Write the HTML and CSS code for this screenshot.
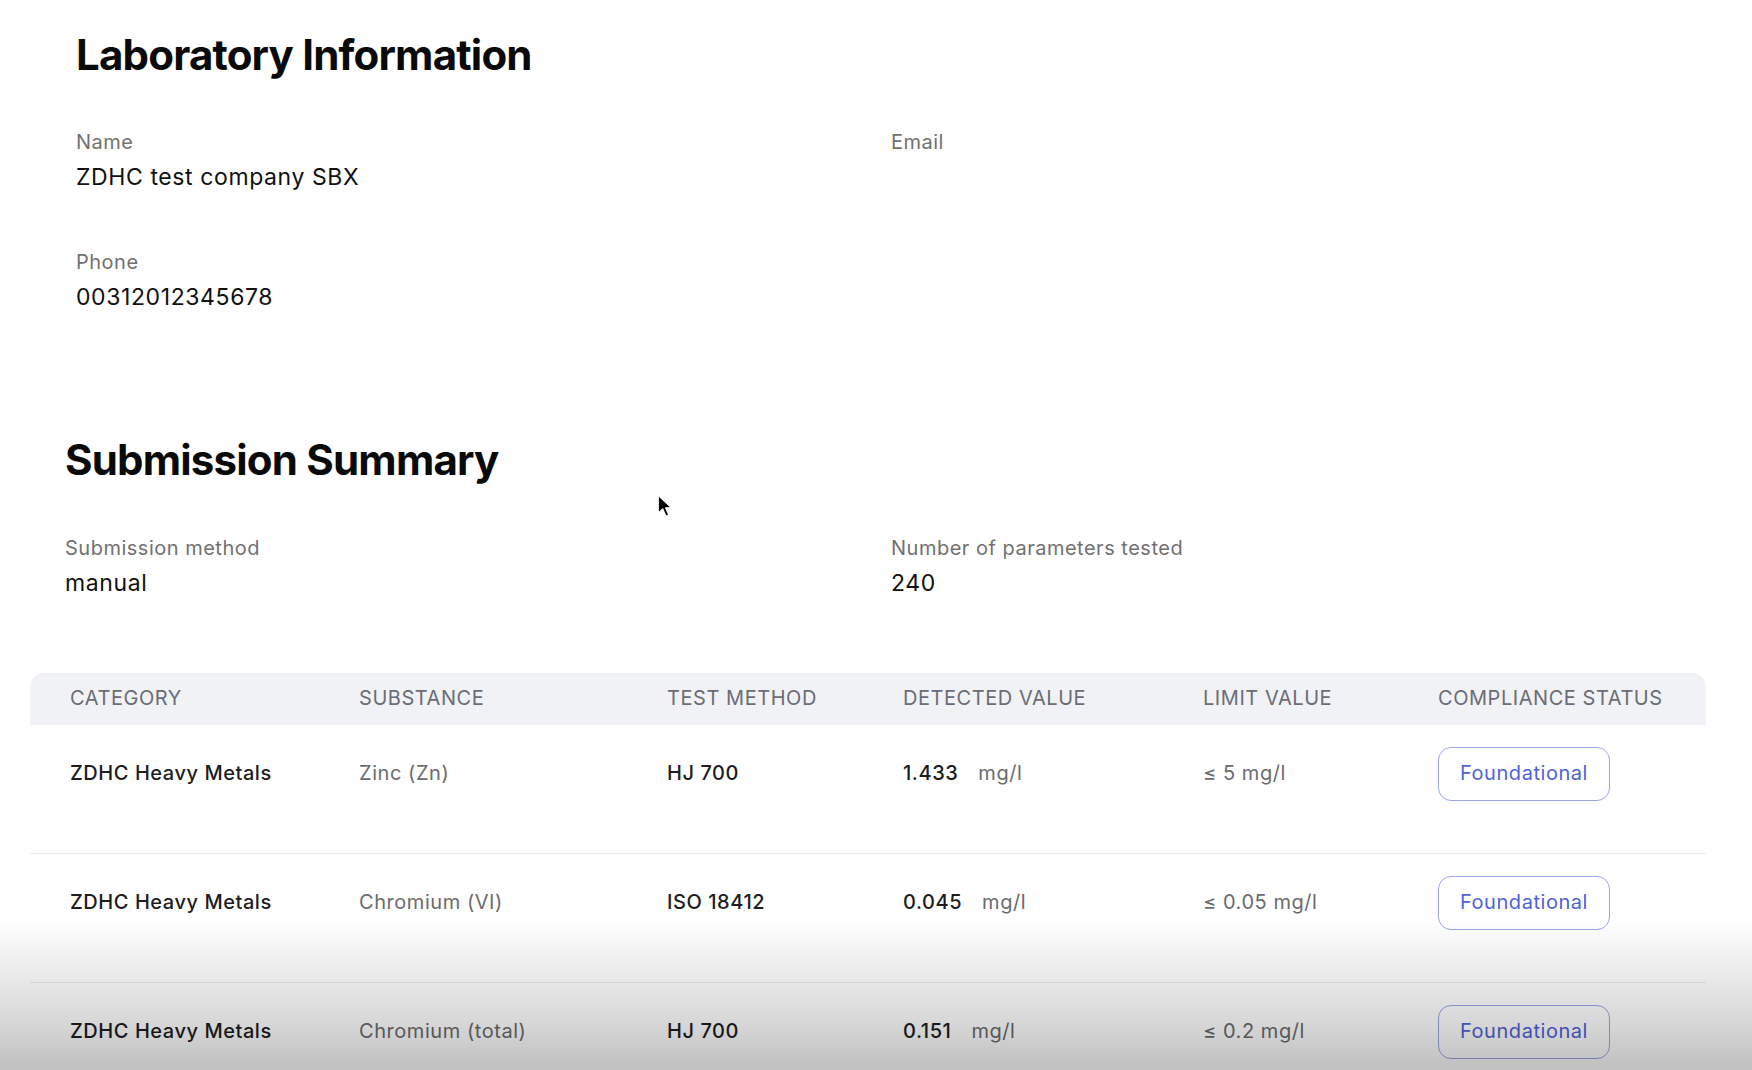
FILE: index.html
```html
<!DOCTYPE html>
<html lang="en">
  <head>
    <meta charset="utf-8">
    <title>Submission details</title>
    <link rel="stylesheet" href="styles.css">
  </head>
  <body>
    <div class="page">
        <section class="lab">
            <h2 class="title">Laboratory Information</h2>
            <div class="fields">
                <div class="field">
                    <p class="label">Name</p>
                    <p class="value">ZDHC test company SBX</p>
                </div>
                <div class="field">
                    <p class="label">Email</p>
                    <p class="value"></p>
                </div>
                <div class="field">
                    <p class="label">Phone</p>
                    <p class="value">00312012345678</p>
                </div>
            </div>
        </section>

        <section class="summary">
            <h2 class="title">Submission Summary</h2>
            <div class="fields fields-wide">
                <div class="field">
                    <p class="label">Submission method</p>
                    <p class="value">manual</p>
                </div>
                <div class="field">
                    <p class="label">Number of parameters tested</p>
                    <p class="value">240</p>
                </div>
            </div>
        </section>

        <table class="results">
            <colgroup>
                <col class="c-cat">
                <col class="c-sub">
                <col class="c-method">
                <col class="c-detected">
                <col class="c-limit">
                <col>
            </colgroup>
            <thead>
                <tr>
                    <th>Category</th>
                    <th>Substance</th>
                    <th>Test method</th>
                    <th>Detected value</th>
                    <th>Limit value</th>
                    <th>Compliance status</th>
                </tr>
            </thead>
            <tbody>
                <tr>
                    <td class="strong">ZDHC Heavy Metals</td>
                    <td class="muted">Zinc (Zn)</td>
                    <td class="strong">HJ 700</td>
                    <td class="strong">1.433<span class="unit">mg/l</span></td>
                    <td class="muted">≤ 5 mg/l</td>
                    <td><span class="badge">Foundational</span></td>
                </tr>
                <tr>
                    <td class="strong">ZDHC Heavy Metals</td>
                    <td class="muted">Chromium (VI)</td>
                    <td class="strong">ISO 18412</td>
                    <td class="strong">0.045<span class="unit">mg/l</span></td>
                    <td class="muted">≤ 0.05 mg/l</td>
                    <td><span class="badge">Foundational</span></td>
                </tr>
                <tr>
                    <td class="strong">ZDHC Heavy Metals</td>
                    <td class="muted">Chromium (total)</td>
                    <td class="strong">HJ 700</td>
                    <td class="strong">0.151<span class="unit">mg/l</span></td>
                    <td class="muted">≤ 0.2 mg/l</td>
                    <td><span class="badge">Foundational</span></td>
                </tr>
            </tbody>
        </table>
    </div>

    <svg class="cursor" width="16" height="25" viewBox="0 0 14 22">
        <path d="M1 1 L1 17 L5 13.2 L7.8 19.6 L10.4 18.5 L7.7 12.2 L12.8 12.2 Z" fill="#000" stroke="#fff" stroke-width="1.2" stroke-linejoin="round"/>
    </svg>
    <div class="shade"></div>
  </body>
</html>
```

FILE: styles.css
```css
*{
    margin: 0;
    padding: 0;
    box-sizing: border-box;
}
body{
    background: #fff;
    font-family: Inter, "Noto Sans", sans-serif;
    color: #111;
    overflow: hidden;
}
.page{
    padding-top: 30px;
}
.title{
    font-size: 42px;
    line-height: 50px;
    font-weight: 700;
    color: #0a0a0a;
    letter-spacing: -0.8px;
}
.lab{
    padding-left: 76px;
}
.lab .title{
    margin-bottom: 50px;
}
.summary{
    padding-left: 65px;
    margin-top: 124px;
}
.summary .title{
    margin-bottom: 51px;
}
.fields{
    display: grid;
    grid-template-columns: 815px 1fr;
    row-gap: 59px;
}
.fields-wide{
    grid-template-columns: 826px 1fr;
}
.label{
    font-size: 20px;
    line-height: 24px;
    letter-spacing: 0.5px;
    color: #717171;
    margin-bottom: 9px;
}
.value{
    font-size: 23px;
    line-height: 28px;
    letter-spacing: 0.6px;
    min-height: 28px;
    color: #111;
}

.results{
    margin: 76px 0 0 30px;
    width: 1676px;
    table-layout: fixed;
    border-collapse: separate;
    border-spacing: 0;
    font-size: 20px;
    letter-spacing: 0.55px;
    text-align: left;
}
.c-cat{ width: 329px; }
.c-sub{ width: 308px; }
.c-method{ width: 236px; }
.c-detected{ width: 300px; }
.c-limit{ width: 235px; }

.results th{
    background: #f1f2f5;
    font-weight: 400;
    color: #6a6d75;
    text-transform: uppercase;
    line-height: 24px;
    padding: 13px 0 15px;
}
.results th:first-child{
    padding-left: 40px;
    border-top-left-radius: 14px;
}
.results th:last-child{
    border-top-right-radius: 14px;
}
.results td{
    line-height: 54px;
    padding: 21px 0 52px;
    border-bottom: 1px solid #ebebef;
    vertical-align: top;
    white-space: nowrap;
}
.results td:first-child{
    padding-left: 40px;
}
.strong{
    font-weight: 500;
    color: #1d1d1f;
}
.muted{
    color: #6b6b6e;
}
.unit{
    font-weight: 400;
    color: #6b6b6e;
    margin-left: 20px;
}
.badge{
    display: inline-block;
    height: 54px;
    line-height: 51px;
    padding: 0 21px;
    border: 1.5px solid #9ba6e6;
    border-radius: 13px;
    color: #4f62d8;
    font-weight: 400;
}

.cursor{
    position: absolute;
    left: 657px;
    top: 494px;
}
.shade{
    position: fixed;
    left: 0;
    right: 0;
    bottom: 0;
    height: 150px;
    pointer-events: none;
    background: linear-gradient(to bottom, rgba(0,0,0,0) 0%, rgba(0,0,0,0.09) 40%, rgba(0,0,0,0.16) 70%, rgba(0,0,0,0.25) 100%);
}
```
